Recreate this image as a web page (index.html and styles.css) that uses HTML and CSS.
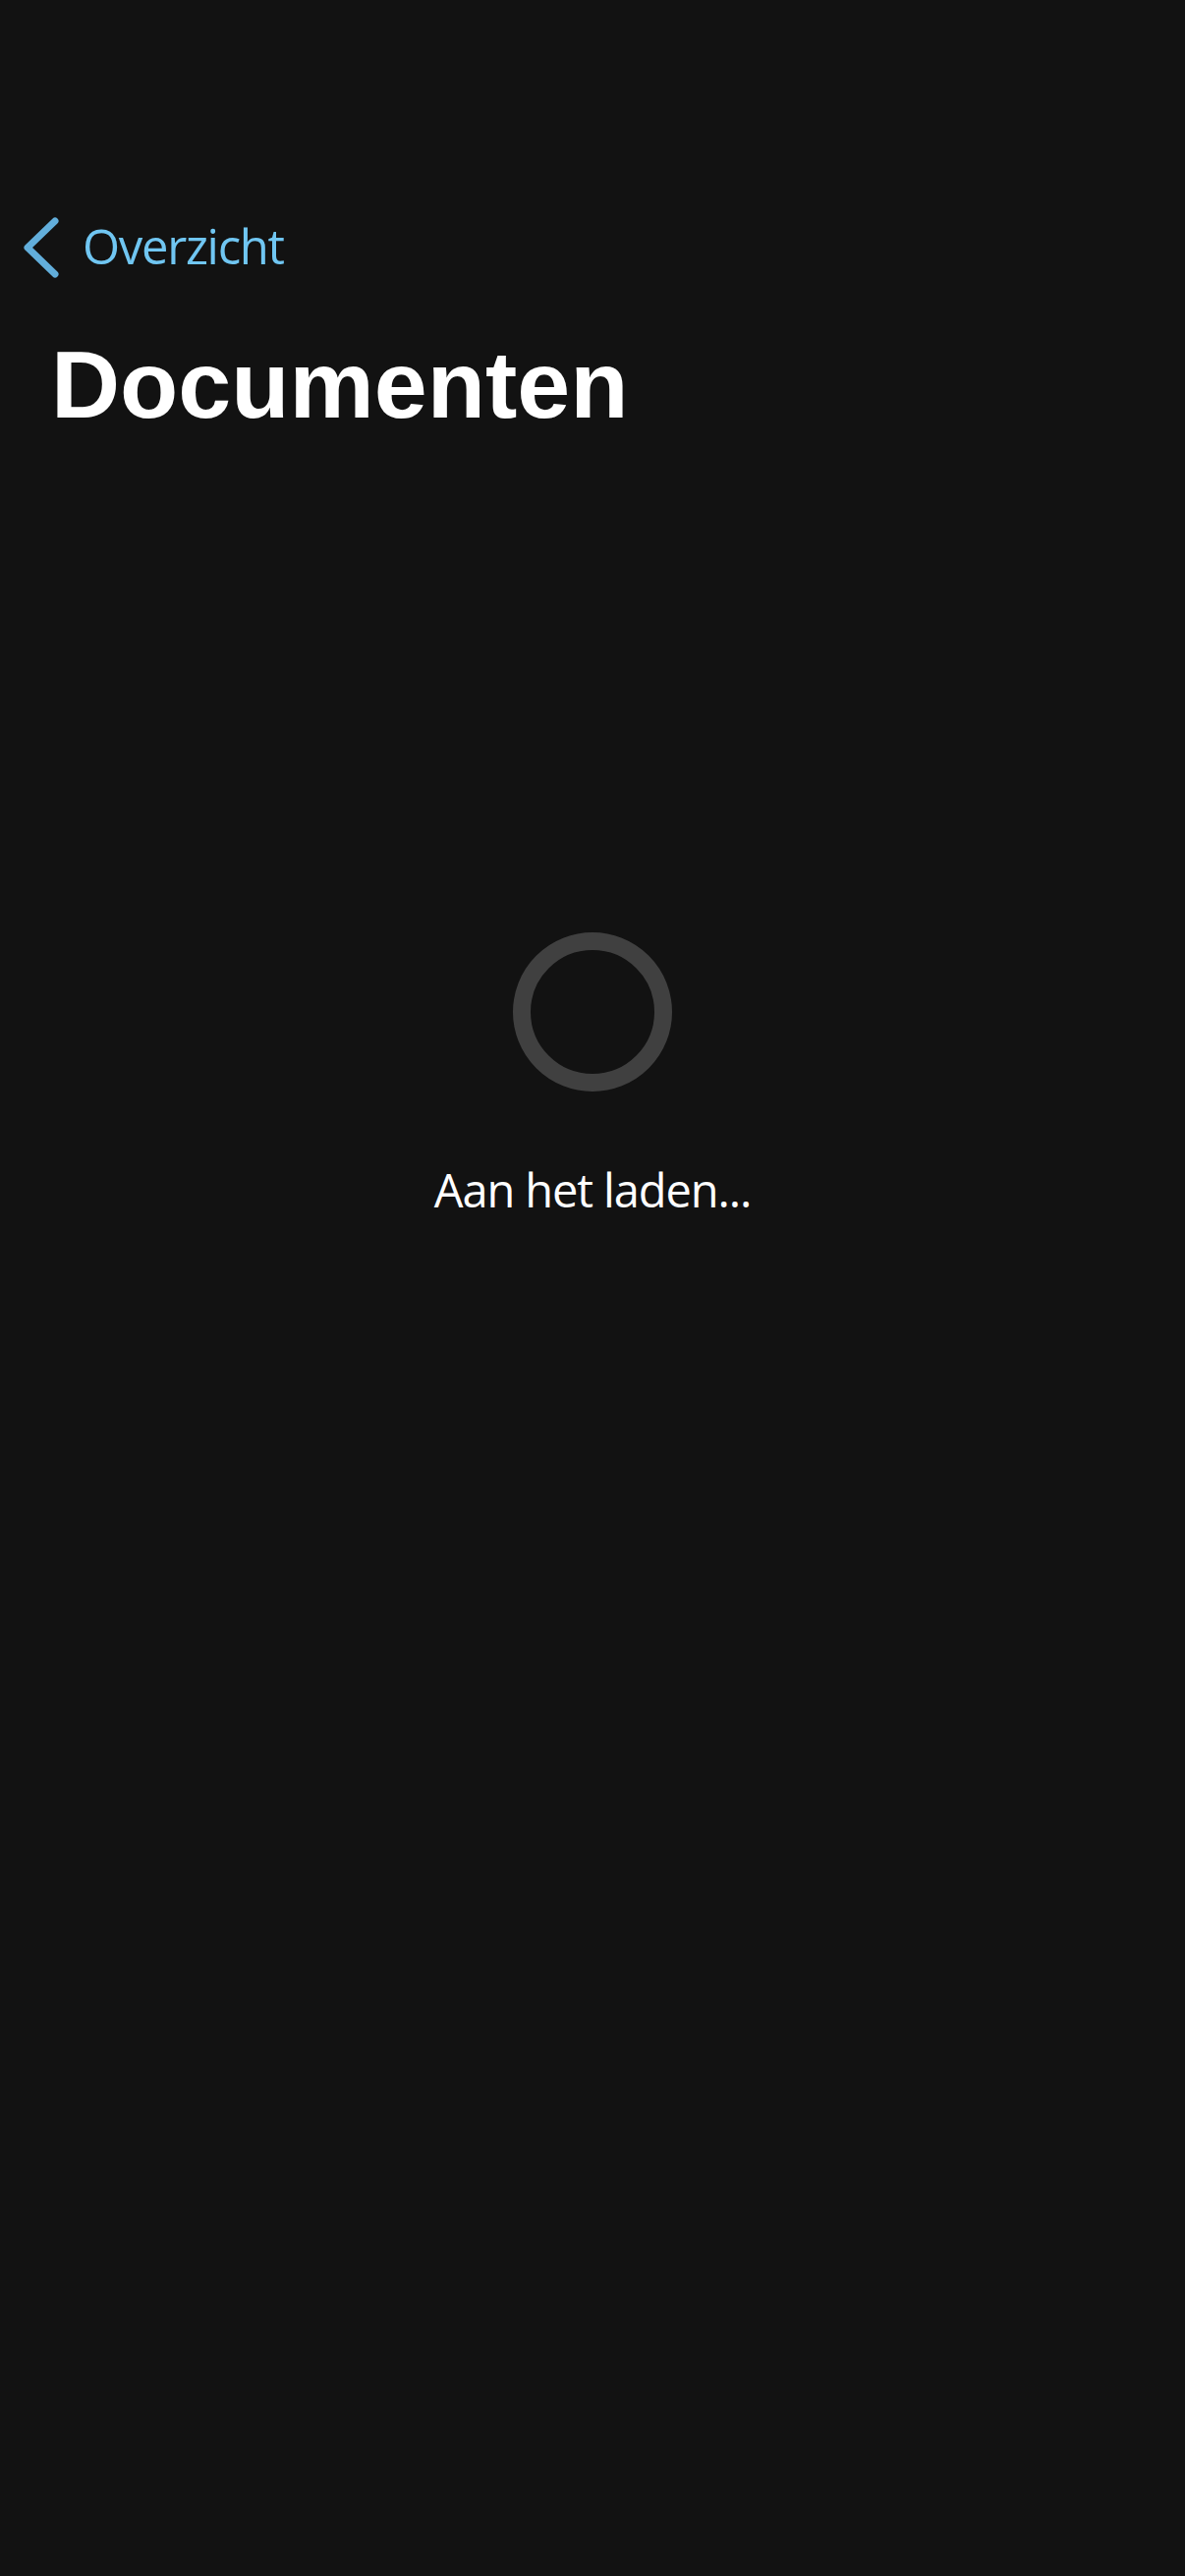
FILE: index.html
```html
<!DOCTYPE html>
<html lang="nl">
<head>
<meta charset="utf-8">
<title>Documenten</title>
<link rel="stylesheet" href="styles.css">
</head>
<body>
<div class="page">
  <nav class="nav">
    <a class="back" href="#">
      <svg class="chev" width="40" height="62" viewBox="0 0 40 62" aria-hidden="true">
        <path d="M36 4 L8 31 L36 58" fill="none" stroke="#62aedb" stroke-width="7" stroke-linecap="round" stroke-linejoin="round"/>
      </svg>
      <span class="back-label">Overzicht</span>
    </a>
  </nav>
  <h1 class="title">Documenten</h1>
  <main class="loader">
    <div class="spinner"></div>
    <p class="loader-text">Aan het laden...</p>
  </main>
</div>
</body>
</html>
```
FILE: styles.css
```css
html, body {
  margin: 0;
  padding: 0;
  background: #121212;
}
.page {
  min-height: 2622px;
  background: #121212;
  box-sizing: border-box;
  padding-top: 222px;
}
.nav {
  display: flex;
  align-items: center;
  height: 60px;
  padding-left: 20px;
}
.back {
  display: flex;
  align-items: center;
  gap: 24px;
  text-decoration: none;
}
.chev {
  display: block;
}
.back-label {
  font-family: "Open Sans", "Noto Sans", sans-serif;
  font-size: 49px;
  line-height: 60px;
  letter-spacing: -1.3px;
  padding-bottom: 4px;
  color: #70c6f2;
}
.title {
  margin: 61px 0 0 52px;
  font-family: "Liberation Sans", Arial, sans-serif;
  font-weight: 700;
  font-size: 97px;
  line-height: 97px;
  color: #ffffff;
}
.loader {
  display: flex;
  flex-direction: column;
  align-items: center;
  margin-top: 509px;
}
.spinner {
  width: 162px;
  height: 162px;
  box-sizing: border-box;
  border: 18px solid #404040;
  border-radius: 50%;
}
.loader-text {
  margin: 70px 0 0;
  font-family: "Open Sans", "Noto Sans", sans-serif;
  font-size: 47px;
  line-height: 60px;
  letter-spacing: -1.1px;
  color: #ffffff;
}
```
